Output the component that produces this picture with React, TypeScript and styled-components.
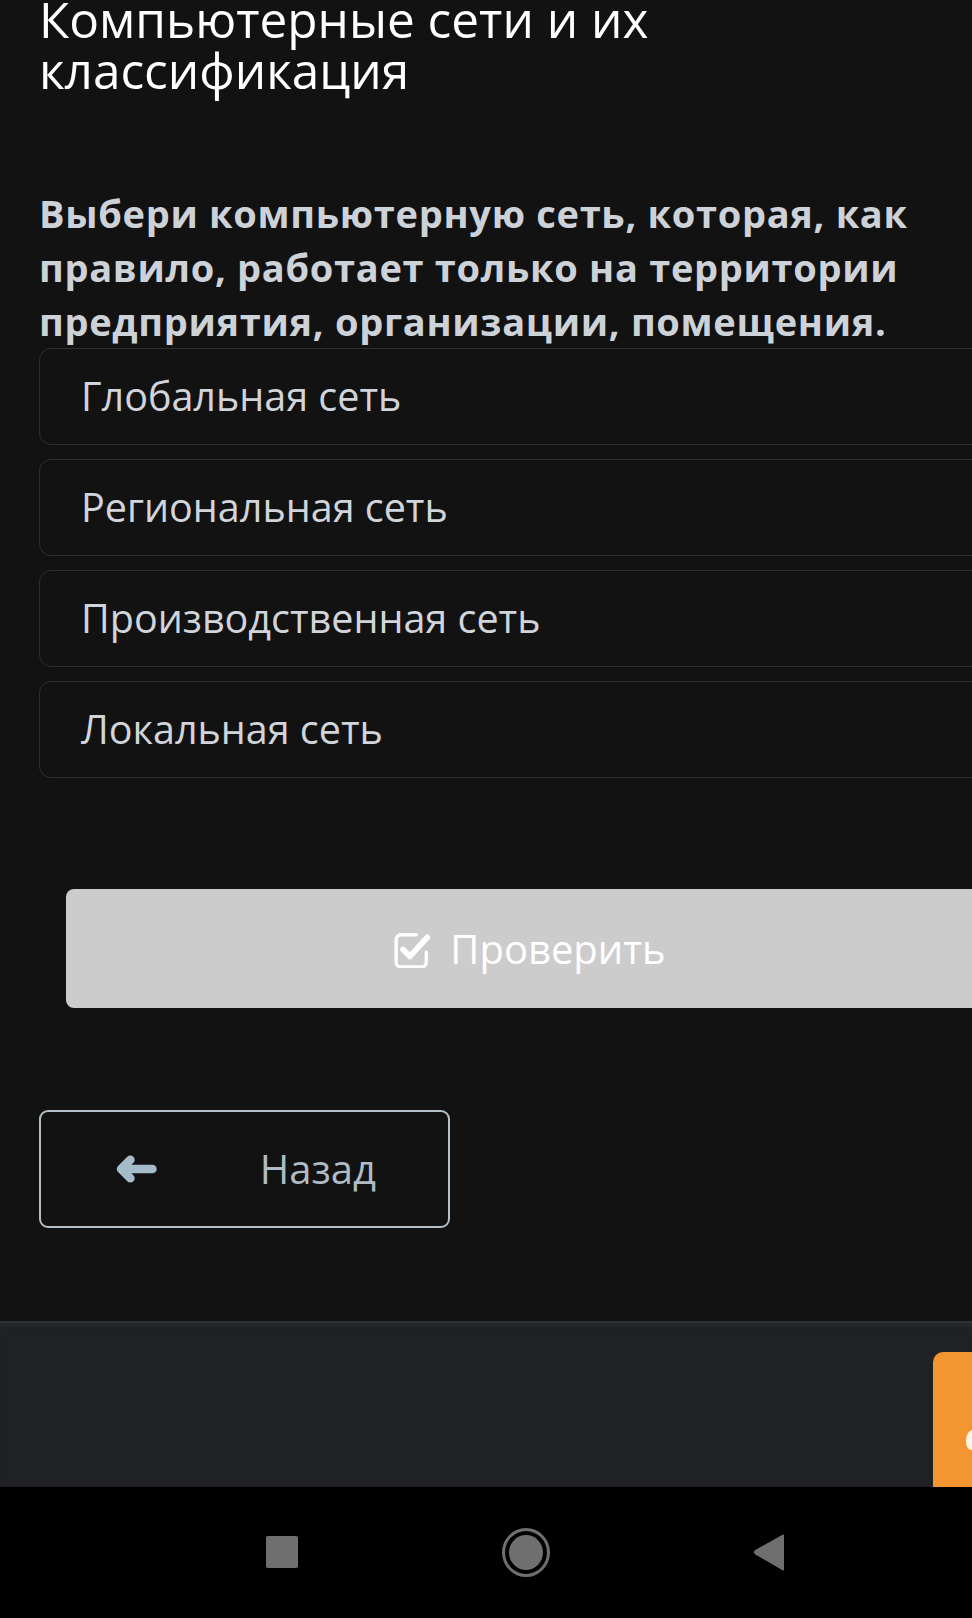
import React from 'react';
import styled, { createGlobalStyle } from 'styled-components';

const options = ['Глобальная сеть', 'Региональная сеть', 'Производственная сеть', 'Локальная сеть'];

export default function App() {
  return (
    <>
      <GlobalStyle />
      <Page>
        <Main>
          <Title>Компьютерные сети и их классификация</Title>
          <Question>
            Выбери компьютерную сеть, которая, как правило, работает только на территории
            предприятия, организации, помещения.
          </Question>
          <OptionList>
            {options.map((o) => (
              <Option key={o}>{o}</Option>
            ))}
          </OptionList>
          <CheckButton type="button">
            <svg width="38" height="37" viewBox="0 0 36 35" fill="none">
              <path
                d="M22 3.5H7.5a4.5 4.5 0 0 0-4.5 4.5v21.5a4.5 4.5 0 0 0 4.5 4.5H27a4.5 4.5 0 0 0 4.5-4.5V20"
                stroke="#fff"
                strokeWidth="3.2"
                strokeLinecap="round"
              />
              <path
                d="M9.5 17.5l6.5 6.5L32.5 6"
                stroke="#fff"
                strokeWidth="5.5"
                strokeLinecap="round"
                strokeLinejoin="round"
              />
            </svg>
            Проверить
          </CheckButton>
          <BackButton type="button">
            <svg width="41" height="28" viewBox="0 0 40 27" fill="none">
              <path
                d="M5 13.5H35.5M14 4.5L5 13.5L14 22.5"
                stroke="#a7bccb"
                strokeWidth="8.5"
                strokeLinecap="round"
                strokeLinejoin="round"
              />
            </svg>
            <span>Назад</span>
          </BackButton>
        </Main>
        <Footer>
          <OrangeTab>
            <TabGlyph />
          </OrangeTab>
        </Footer>
        <NavBar>
          <NavSquare />
          <NavHome>
            <NavHomeDot />
          </NavHome>
          <svg width="34" height="38" viewBox="0 0 34 38">
            <path d="M31 2.5L3.5 18a1.6 1.6 0 0 0 0 2.3L31 36.5z" fill="#6f6f6f" strokeLinejoin="round" stroke="#6f6f6f" strokeWidth="2" />
          </svg>
        </NavBar>
      </Page>
    </>
  );
}

const GlobalStyle = createGlobalStyle`
  html, body {
    margin: 0;
    padding: 0;
    background: #121212;
    overflow: hidden;
  }
  * {
    box-sizing: border-box;
  }
`;

const Page = styled.div`
  width: 972px;
  height: 1618px;
  overflow: hidden;
  display: flex;
  flex-direction: column;
  font-family: 'Open Sans', 'Noto Sans', sans-serif;
`;

const Main = styled.main`
  width: 1020px;
  padding-left: 39px;
  display: flex;
  flex-direction: column;
  flex: none;
`;

const Title = styled.h1`
  margin: -6px 0 0;
  width: 720px;
  font-size: 49.5px;
  font-weight: 400;
  line-height: 51px;
  color: #ffffff;
`;

const Question = styled.p`
  margin: 90px 0 0;
  width: 920px;
  font-size: 38px;
  font-weight: 700;
  letter-spacing: 0.7px;
  line-height: 54px;
  color: #cdd2d9;
`;

const OptionList = styled.div`
  display: flex;
  flex-direction: column;
  gap: 14px;
`;

const Option = styled.div`
  height: 97px;
  padding: 17px 41px;
  border: 1px solid #2d2f32;
  border-radius: 12px;
  background: #121212;
  font-size: 39.5px;
  line-height: 60px;
  color: #d1d5db;
`;

const CheckButton = styled.button`
  margin: 111px 27px 0;
  height: 119px;
  border: none;
  border-radius: 8px;
  background: #cccccc;
  color: #ffffff;
  font-family: inherit;
  font-size: 40px;
  display: flex;
  align-items: center;
  justify-content: center;
  gap: 19px;
  padding: 0;

  svg {
    margin-top: 2px;
  }
`;

const BackButton = styled.button`
  margin-top: 102px;
  width: 411px;
  height: 118px;
  border: 2px solid #b4c0c8;
  border-radius: 9px;
  background: transparent;
  color: #aebcc5;
  font-family: inherit;
  font-size: 40px;
  display: flex;
  align-items: center;
  justify-content: space-between;
  padding: 0 72px 0 75px;

  span {
    margin-top: -2px;
  }
`;

const Footer = styled.footer`
  margin-top: 93px;
  height: 166px;
  flex: none;
  background: #202124;
  border-top: 2px solid #2e3236;
  box-shadow: inset 0 6px 6px -4px #2a2d31;
  display: flex;
  justify-content: flex-end;
  padding-top: 29px;
  overflow: hidden;
`;

const OrangeTab = styled.div`
  position: relative;
  width: 60px;
  height: 160px;
  margin-right: -21px;
  background: #f39530;
  border-radius: 10px;
`;

const TabGlyph = styled.div`
  position: absolute;
  left: 33px;
  top: 78px;
  width: 14px;
  height: 20px;
  border-radius: 50% 50% 40% 40%;
  background: #fff4e6;
`;

const NavBar = styled.nav`
  flex: 1;
  background: #000000;
  display: flex;
  align-items: center;
  padding-left: 266px;
  padding-bottom: 1px;

  & > svg {
    margin-left: 202px;
  }
`;

const NavSquare = styled.div`
  width: 32px;
  height: 32px;
  border-radius: 2px;
  background: #6f6f6f;
`;

const NavHome = styled.div`
  margin-left: 204px;
  width: 48px;
  height: 49px;
  border-radius: 50%;
  border: 3px solid #6f6f6f;
  display: flex;
  align-items: center;
  justify-content: center;
`;

const NavHomeDot = styled.div`
  width: 34px;
  height: 35px;
  border-radius: 50%;
  background: #6f6f6f;
`;
